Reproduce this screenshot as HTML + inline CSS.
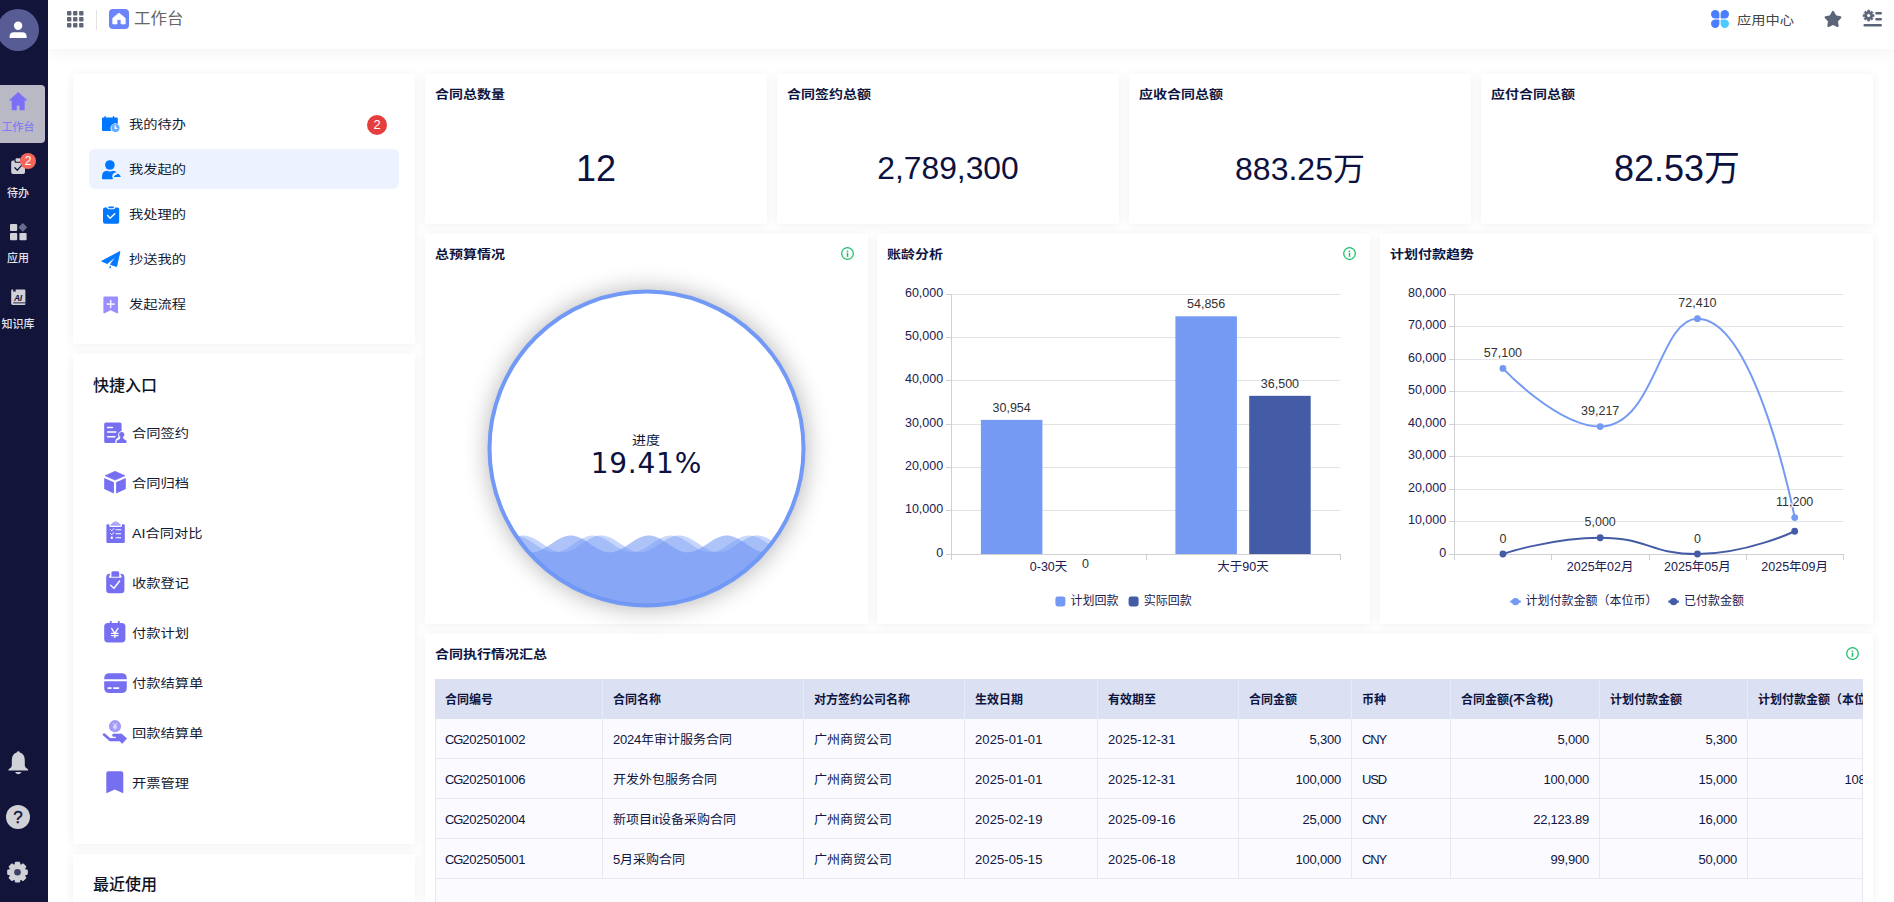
<!DOCTYPE html><html lang="zh-CN"><head><meta charset="utf-8"><title>工作台</title><style>
*{box-sizing:border-box;margin:0;padding:0}
html,body{width:1894px;height:902px;overflow:hidden;background:#fff}
body{font-family:"Liberation Sans","Noto Sans CJK SC",sans-serif;color:#1f2330;position:relative;-webkit-font-smoothing:antialiased}
.abs{position:absolute}
.z{display:inline-block;transform:scale(1.02,.89);transform-origin:0 52%}
.zc{transform:scaleY(.89);transform-origin:50% 52%}
.ct .z{transform:scaleY(.87);transform-origin:50% 50%}
.z13{display:inline-block;transform:scaleY(.95);transform-origin:50% 55%;letter-spacing:0}
.t{position:absolute;white-space:nowrap;line-height:1}
svg{position:absolute;overflow:visible}
#side{position:absolute;left:0;top:0;width:48px;height:902px;background:#121539}
#hdr{position:absolute;left:48px;top:0;width:1846px;height:49px;background:#fff;box-shadow:0 2px 18px rgba(0,0,0,.06)}
.card{position:absolute;background:#fff;box-shadow:0 1px 10px rgba(0,0,0,.065)}
.ct{position:absolute;left:10px;font-size:14px;font-weight:700;color:#0e1541;line-height:14px;white-space:nowrap}
.num{position:absolute;left:0;right:0;text-align:center;font-size:36px;line-height:36px;color:#0c1140;white-space:nowrap}
.mi{position:absolute;left:16px;width:310px;height:40px;border-radius:6px}
.mi span{position:absolute;left:40px;top:14px;font-size:14px;line-height:14px;color:#131a33;white-space:nowrap}
.mi span span{position:static}
.qi{position:absolute;left:59px;font-size:14px;line-height:14px;color:#131a33;white-space:nowrap}
.sl{position:absolute;left:-12px;width:60px;text-align:center;font-size:11px;line-height:12px;color:#e2e2e8;white-space:nowrap;font-weight:500}
.h2{position:absolute;left:20px;font-size:16px;line-height:16px;font-weight:500;color:#10131f;white-space:nowrap}
</style></head><body>
<div id="hdr"><svg style="left:18.6px;top:10.8px" width="17" height="17" viewBox="0 0 17 17" ><rect x="0.00" y="0.00" width="4.4" height="4.4" rx="0.9" fill="#5f6675"/><rect x="6.05" y="0.00" width="4.4" height="4.4" rx="0.9" fill="#5f6675"/><rect x="12.10" y="0.00" width="4.4" height="4.4" rx="0.9" fill="#5f6675"/><rect x="0.00" y="6.05" width="4.4" height="4.4" rx="0.9" fill="#5f6675"/><rect x="6.05" y="6.05" width="4.4" height="4.4" rx="0.9" fill="#5f6675"/><rect x="12.10" y="6.05" width="4.4" height="4.4" rx="0.9" fill="#5f6675"/><rect x="0.00" y="12.10" width="4.4" height="4.4" rx="0.9" fill="#5f6675"/><rect x="6.05" y="12.10" width="4.4" height="4.4" rx="0.9" fill="#5f6675"/><rect x="12.10" y="12.10" width="4.4" height="4.4" rx="0.9" fill="#5f6675"/></svg><div class="abs" style="left:48px;top:10px;width:1px;height:20px;background:#e3e3e3"></div><svg style="left:61px;top:9px" width="20" height="20" viewBox="0 0 20 20" ><rect x="0" y="0" width="20" height="20" rx="4" fill="#6b84fa"/><path d="M10 4.1 L16.2 9.2 L16.2 14.9 L12 14.9 L12 11.4 Q12 10.6 11.2 10.6 L8.8 10.6 Q8 10.6 8 11.4 L8 14.9 L3.8 14.9 L3.8 9.2 Z" fill="#fff" stroke="#fff" stroke-width="0.8" stroke-linejoin="round"/></svg><svg style="left:1663px;top:9.9px" width="18" height="18" viewBox="0 0 18 18" ><path d="M4.2 0 A4.2 4.2 0 0 1 8.4 4.2 L8.4 7.2 Q8.4 8.4 7.2 8.4 L4.2 8.4 A4.2 4.2 0 0 1 4.2 0Z" fill="#4a7dff"/><path d="M13.8 0 A4.2 4.2 0 0 1 13.8 8.4 L10.8 8.4 Q9.6 8.4 9.6 7.2 L9.6 4.2 A4.2 4.2 0 0 1 13.8 0Z" fill="#4a7dff"/><path d="M4.2 18 A4.2 4.2 0 0 1 4.2 9.6 L7.2 9.6 Q8.4 9.6 8.4 10.8 L8.4 13.8 A4.2 4.2 0 0 1 4.2 18Z" fill="#4a7dff"/><path d="M13.8 18 A4.2 4.2 0 0 1 9.6 13.8 L9.6 10.8 Q9.6 9.6 10.8 9.6 L13.8 9.6 A4.2 4.2 0 0 1 13.8 18Z" fill="#4dcbff"/></svg><svg style="left:1776px;top:10px" width="18" height="18" viewBox="0 0 18 18" ><path d="M9.00,2.00L11.41,6.38L16.32,7.32L12.90,10.97L13.53,15.93L9.00,13.80L4.47,15.93L5.10,10.97L1.68,7.32L6.59,6.38Z" fill="#5b6478" stroke="#5b6478" stroke-width="2.2" stroke-linejoin="round"/></svg><svg style="left:1815px;top:10px" width="19" height="17" viewBox="0 0 19 17" ><path d="M10.92,4.67L10.92,6.53L9.59,6.56L9.10,7.74L10.02,8.71L8.71,10.02L7.74,9.10L6.56,9.59L6.53,10.92L4.67,10.92L4.64,9.59L3.46,9.10L2.49,10.02L1.18,8.71L2.10,7.74L1.61,6.56L0.28,6.53L0.28,4.67L1.61,4.64L2.10,3.46L1.18,2.49L2.49,1.18L3.46,2.10L4.64,1.61L4.67,0.28L6.53,0.28L6.56,1.61L7.74,2.10L8.71,1.18L10.02,2.49L9.10,3.46L9.59,4.64ZM7.60,5.60A2.0,2.0 0 1 0 3.60,5.60A2.0,2.0 0 1 0 7.60,5.60Z" fill="#5b6478" fill-rule="evenodd" stroke="#5b6478" stroke-width="0.9" stroke-linejoin="round"/><path d="M13.4 3.3 H17.8 M13.4 9.2 H17.8 M1.6 15.3 H17.8" stroke="#5b6478" stroke-width="2.4" stroke-linecap="round" fill="none"/></svg><div class="t" style="left:86px;top:11px;font-size:16px;line-height:16px;color:#666"><span class="z" style="transform:scale(1.03,.96)">工作台</span></div><div class="t" style="left:1688.5px;top:14.4px;font-size:14px;line-height:14px;color:#444"><span class="z">应用中心</span></div></div>
<div class="card" style="left:73px;top:74px;width:342px;height:270px">
<div class="mi" style="top:30px;"><svg style="left:12px;top:11.5px" width="20" height="17" viewBox="0 0 20 17" ><path d="M1 2.4 Q1 1.4 2 1.4 L3.4 1.4 L3.4 0.6 Q3.4 0.1 4.1 0.1 Q4.8 0.1 4.8 0.6 L4.8 1.4 L11.8 1.4 L11.8 0.6 Q11.8 0.1 12.5 0.1 Q13.2 0.1 13.2 0.6 L13.2 1.4 L15.8 1.4 Q16.8 1.4 16.8 2.4 L16.8 7.9 A4.9 4.9 0 0 0 10.4 14.9 L2 14.9 Q1 14.9 1 13.9 Z" fill="#0077ff"/><circle cx="14.45" cy="12.1" r="4.1" fill="#66adff"/><path d="M14.2 9.9 V12.4 H15.9" stroke="#fff" stroke-width="1.3" fill="none" stroke-linecap="round" stroke-linejoin="round"/></svg><span><span class="z">我的待办</span></span></div>
<div class="mi" style="top:75px;background:#ecf3fe;"><svg style="left:12px;top:11px" width="21" height="20" viewBox="0 0 21 20" ><circle cx="8.9" cy="5" r="4.8" fill="#0077ff"/><path d="M1 18.4 L1 16.5 Q1 11 6 10.7 Q9 12.3 12 10.7 Q14.5 10.9 15.8 12.6 L14 12.6 Q11.4 13.4 11.2 16 Q11.2 17.4 12 18.4 Q12 19.2 11 19.2 L2 19.2 Q1 19.2 1 18.4Z" fill="#0077ff"/><path d="M13.4 16.4 L19.1 16.4 L17.2 14.3 Z" fill="#0077ff" stroke="#0077ff" stroke-width="1.1" fill="none" stroke-linejoin="round" stroke-linecap="round"/></svg><span><span class="z">我发起的</span></span></div>
<div class="mi" style="top:120px;"><svg style="left:12.8px;top:11.8px" width="18" height="18" viewBox="0 0 18 18" ><path d="M1 3.6 Q1 1.6 3 1.6 L4.9 1.6 Q5.2 3.2 6.6 3.2 L11.6 3.2 Q13 3.2 13.3 1.6 L15.2 1.6 Q17.2 1.6 17.2 3.6 L17.2 15.8 Q17.2 17.8 15.2 17.8 L3 17.8 Q1 17.8 1 15.8Z" fill="#0077ff"/><rect x="6.2" y="0.4" width="5.8" height="1.8" rx="0.9" fill="#0077ff"/><path d="M5.6 9.6 L8.1 12.2 L12.8 7.8" stroke="#fff" stroke-width="1.5" fill="none" stroke-linecap="round" stroke-linejoin="round"/></svg><span><span class="z">我处理的</span></span></div>
<div class="mi" style="top:165px;"><svg style="left:12px;top:11px" width="20" height="19" viewBox="0 0 20 19" ><path d="M18.9 1.5 L0.7 11.2 L6.3 13.6 L15.8 5.6 L9.4 14.4 L15.6 16.5 Z" fill="#0077ff" stroke="#0077ff" stroke-width="0.9" stroke-linejoin="round"/><path d="M9.3 16.6 L9.2 17.8" stroke="#0077ff" stroke-width="1.3" stroke-linecap="round"/></svg><span><span class="z">抄送我的</span></span></div>
<div class="mi" style="top:210px;"><svg style="left:14.2px;top:11.8px" width="16" height="18" viewBox="0 0 16 18" ><path d="M0.4 1.6 Q0.4 0.4 1.6 0.4 L13.8 0.4 Q15 0.4 15 1.6 L15 16.4 Q15 17.6 13.8 17.2 L7.7 14.2 L1.6 17.2 Q0.4 17.6 0.4 16.4Z" fill="#9b8cff"/><path d="M7.7 4.6 V11.6 M4.2 8.1 H11.2" stroke="#f1eeff" stroke-width="1.6" stroke-linecap="round"/></svg><span><span class="z">发起流程</span></span></div>
<div class="abs" style="left:294px;top:41px;width:20px;height:20px;border-radius:10px;background:#e53e3e;color:#fff;font-size:13px;line-height:20px;text-align:center">2</div>
</div>
<div class="card" style="left:73px;top:354px;width:342px;height:490px"><div class="h2" style="top:23.5px">快捷入口</div>
<svg style="left:30.8px;top:67.8px" width="23" height="21" viewBox="0 0 23 21" ><path d="M0.2 2 Q0.2 0.4 1.8 0.4 L16 0.4 Q17.6 0.4 17.6 2 L17.6 9 A4 4 0 0 0 14.6 15 Q11.4 16.6 11.2 19.6 L11.2 21 L1.8 21 Q0.2 21 0.2 19.4Z" fill="#776ff2"/><path d="M3.6 5.4 H8.4 M3.6 10.1 H11.8 M3.6 14.8 H10.8" stroke="#fff" stroke-width="1.5" stroke-linecap="round"/><circle cx="17.7" cy="12.6" r="2.6" fill="#776ff2"/><path d="M12.6 21 L12.6 19.6 Q12.6 18.2 14 18 Q16.2 17.6 16.6 14.8 L18.8 14.8 Q19.2 17.6 21.4 18 Q22.6 18.2 22.6 19.6 L22.6 20.2 Q22.6 21 21.8 21Z" fill="#776ff2"/></svg><div class="qi" style="top:72.7px"><span class="z">合同签约</span></div>
<svg style="left:31px;top:116.6px" width="22" height="23" viewBox="0 0 22 23" ><path d="M11 0.3 L21 4.7 L11 9.1 L1 4.7Z" fill="#776ff2" stroke="#776ff2" stroke-width="0.6" stroke-linejoin="round"/><path d="M0.2 7 L9.9 11.3 L9.9 22.4 L0.2 18.1Z" fill="#776ff2"/><path d="M21.8 7 L12.1 11.3 L12.1 22.4 L21.8 18.1Z" fill="#776ff2"/></svg><div class="qi" style="top:122.7px"><span class="z">合同归档</span></div>
<svg style="left:32.9px;top:166.8px" width="19" height="22" viewBox="0 0 19 22" ><path d="M0.4 4.4 Q0.4 3.2 1.6 3.2 L3.2 3.2 L3.2 4.6 Q3.2 6 4.6 6 L14.6 6 Q16 6 16 4.6 L16 3.2 L17.6 3.2 Q18.8 3.2 18.8 4.4 L18.8 20.8 Q18.8 22 17.6 22 L1.6 22 Q0.4 22 0.4 20.8Z" fill="#776ff2"/><path d="M4.4 4.8 L4.4 3.8 L8 0.7 Q9.6 -0.3 11.2 0.7 L14.8 3.8 L14.8 4.8Z" fill="#a9a2f6"/><circle cx="9.6" cy="1.8" r="0.7" fill="#d6d2fb"/><path d="M4.6 8.6 L5.8 9.8 L7.8 7.6 M4.6 12.6 L5.8 13.8 L7.8 11.6" stroke="#fff" stroke-width="1" fill="none" stroke-linecap="round" stroke-linejoin="round"/><circle cx="5.8" cy="16.7" r="1.2" fill="#fff"/><path d="M10 8.7 H14.8 M10 12.7 H14.8 M10 16.7 H14.8" stroke="#fff" stroke-width="1.1" stroke-linecap="round"/></svg><div class="qi" style="top:172.7px"><span class="z">AI合同对比</span></div>
<svg style="left:32.9px;top:216.8px" width="19" height="23" viewBox="0 0 19 23" ><path d="M0.2 6.2 Q0.2 2.8 3.6 2.8 L4.4 2.8 L3 5.6 Q2.6 6.8 3.8 6.8 L14.8 6.8 Q16 6.8 15.6 5.6 L14.2 2.8 L15 2.8 Q18.4 2.8 18.4 6.2 L18.4 19 Q18.4 22.2 15 22.2 L3.6 22.2 Q0.2 22.2 0.2 19Z" fill="#776ff2"/><path d="M5.4 5.8 L5.4 1.8 Q5.4 0.2 7 0.2 L11.6 0.2 Q13.2 0.2 13.2 1.8 L13.2 5.8Z" fill="#776ff2"/><path d="M4.6 14.2 L8 17.2 L13.6 10" stroke="#fff" stroke-width="1.4" fill="none" stroke-linecap="round" stroke-linejoin="round"/></svg><div class="qi" style="top:222.7px"><span class="z">收款登记</span></div>
<svg style="left:31.3px;top:267px" width="22" height="22" viewBox="0 0 22 22" ><rect x="0.2" y="2" width="21.2" height="19.4" rx="3.6" fill="#776ff2"/><rect x="5.9" y="0" width="1.8" height="3" rx="0.6" fill="#776ff2"/><rect x="13.9" y="0" width="1.8" height="3" rx="0.6" fill="#776ff2"/><path d="M7.6 7.4 L10.8 12.4 L14 7.4 M10.8 12.4 V16.6 M7.6 12.4 H14 M7.6 14.6 H14" stroke="#fff" stroke-width="1.3" fill="none" stroke-linecap="round" stroke-linejoin="round"/></svg><div class="qi" style="top:272.7px"><span class="z">付款计划</span></div>
<svg style="left:30.7px;top:319px" width="23" height="20" viewBox="0 0 23 20" ><path d="M0.2 6.2 L0.2 5.4 Q0.2 0.2 5.4 0.2 L17.6 0.2 Q22.8 0.2 22.8 5.4 L22.8 6.2Z" fill="#776ff2"/><path d="M0.2 8.2 L22.8 8.2 L22.8 14.8 Q22.8 20 17.6 20 L5.4 20 Q0.2 20 0.2 14.8Z" fill="#776ff2"/><path d="M4.2 15.1 H7 M9.8 15.1 H14.6" stroke="#fff" stroke-width="1.6" stroke-linecap="round"/></svg><div class="qi" style="top:322.7px"><span class="z">付款结算单</span></div>
<svg style="left:30.2px;top:366px" width="24" height="24" viewBox="0 0 24 24" ><circle cx="12" cy="6.2" r="6.1" fill="#a39cf6"/><path d="M10.4 3.4 L12 5.6 L13.6 3.4 M12 5.6 V9.4 M10.2 6.2 H13.8 M10.2 7.8 H13.8" stroke="#e6e3fd" stroke-width="0.9" fill="none" stroke-linecap="round"/><path d="M1 14.6 L6.8 19.6 L12 19.6" stroke="#776ff2" stroke-width="2.6" fill="none" stroke-linecap="round" stroke-linejoin="round"/><path d="M10 14 L18.6 14 L23.8 18.6 L19.2 23.4 L16.6 21 L7 21 L5.6 19 L12.6 18.4 Q13.8 17 12.6 16.4 L10 16.4 Q8.8 15.2 10 14Z" fill="#776ff2" stroke="#776ff2" stroke-width="0.6" stroke-linejoin="round"/></svg><div class="qi" style="top:372.7px"><span class="z">回款结算单</span></div>
<svg style="left:33.3px;top:416.8px" width="18" height="23" viewBox="0 0 18 23" ><path d="M0.3 2.2 Q0.3 0.2 2.3 0.2 L15.3 0.2 Q17.3 0.2 17.3 2.2 L17.3 21.6 Q17.3 22.4 16.6 22 L8.8 18.4 L1 22 Q0.3 22.4 0.3 21.6Z" fill="#776ff2"/></svg><div class="qi" style="top:422.7px"><span class="z">开票管理</span></div>
</div>
<div class="card" style="left:73px;top:854px;width:342px;height:48px"><div class="h2" style="top:22.5px">最近使用</div></div>
<div class="card" style="left:425px;top:74px;width:342px;height:150px"><div class="ct" style="top:13.5px"><span class="z">合同总数量</span></div><div class="num" style="top:76.8px;font-size:36px;line-height:36px">12</div></div>
<div class="card" style="left:777px;top:74px;width:342px;height:150px"><div class="ct" style="top:13.5px"><span class="z">合同签约总额</span></div><div class="num" style="top:78.89999999999999px;font-size:31.8px;line-height:31.8px">2,789,300</div></div>
<div class="card" style="left:1129px;top:74px;width:342px;height:150px"><div class="ct" style="top:13.5px"><span class="z">应收合同总额</span></div><div class="num" style="top:78.8px;font-size:32px;line-height:32px">883.25万</div></div>
<div class="card" style="left:1481px;top:74px;width:392px;height:150px"><div class="ct" style="top:13.5px"><span class="z">应付合同总额</span></div><div class="num" style="top:76.8px;font-size:36px;line-height:36px">82.53万</div></div>
<div class="card" style="left:425px;top:234px;width:443px;height:390px"><div class="ct" style="top:13.5px"><span class="z">总预算情况</span></div><svg style="left:416.3px;top:13px" width="13" height="13" viewBox="0 0 13 13" ><circle cx="6.5" cy="6.5" r="5.8" fill="none" stroke="#1cbd68" stroke-width="1.25"/><rect x="5.75" y="5.7" width="1.5" height="4.1" fill="#1cbd68"/><rect x="5.75" y="3.7" width="1.5" height="1.3" fill="#1cbd68"/></svg><div class="abs" style="left:63.5px;top:56.5px;width:316.0px;height:316.0px;border-radius:50%;background:#fff;box-shadow:0 0 24px 1px rgba(0,0,0,.30)"></div><svg style="left:0;top:0" width="442" height="390" viewBox="0 0 442 390"><defs><clipPath id="lqc"><circle cx="221.5" cy="214.5" r="156.0"/></clipPath></defs><circle cx="221.5" cy="214.5" r="157.0" fill="#fff" stroke="#7299f5" stroke-width="4.0"/><g clip-path="url(#lqc)"><path d="M60.5,315.99L62.0,315.24L63.5,314.42L65.0,313.53L66.5,312.59L68.0,311.61L69.5,310.60L71.0,309.59L72.5,308.58L74.0,307.59L75.5,306.64L77.0,305.73L78.5,304.88L80.0,304.11L81.5,303.42L83.0,302.83L84.5,302.34L86.0,301.96L87.5,301.70L89.0,301.56L90.5,301.54L92.0,301.64L93.5,301.86L95.0,302.20L96.5,302.65L98.0,303.21L99.5,303.87L101.0,304.62L102.5,305.44L104.0,306.33L105.5,307.27L107.0,308.25L108.5,309.25L110.0,310.27L111.5,311.28L113.0,312.27L114.5,313.22L116.0,314.13L117.5,314.98L119.0,315.75L120.5,316.44L122.0,317.03L123.5,317.52L125.0,317.90L126.5,318.16L128.0,318.30L129.5,318.32L131.0,318.22L132.5,318.00L134.0,317.66L135.5,317.20L137.0,316.64L138.5,315.99L140.0,315.24L141.5,314.42L143.0,313.53L144.5,312.59L146.0,311.61L147.5,310.60L149.0,309.59L150.5,308.58L152.0,307.59L153.5,306.64L155.0,305.73L156.5,304.88L158.0,304.11L159.5,303.42L161.0,302.83L162.5,302.34L164.0,301.96L165.5,301.70L167.0,301.56L168.5,301.54L170.0,301.64L171.5,301.86L173.0,302.20L174.5,302.65L176.0,303.21L177.5,303.87L179.0,304.62L180.5,305.44L182.0,306.33L183.5,307.27L185.0,308.25L186.5,309.25L188.0,310.27L189.5,311.28L191.0,312.27L192.5,313.22L194.0,314.13L195.5,314.98L197.0,315.75L198.5,316.44L200.0,317.03L201.5,317.52L203.0,317.90L204.5,318.16L206.0,318.30L207.5,318.32L209.0,318.22L210.5,318.00L212.0,317.66L213.5,317.20L215.0,316.64L216.5,315.99L218.0,315.24L219.5,314.42L221.0,313.53L222.5,312.59L224.0,311.61L225.5,310.60L227.0,309.59L228.5,308.58L230.0,307.59L231.5,306.64L233.0,305.73L234.5,304.88L236.0,304.11L237.5,303.42L239.0,302.83L240.5,302.34L242.0,301.96L243.5,301.70L245.0,301.56L246.5,301.54L248.0,301.64L249.5,301.86L251.0,302.20L252.5,302.65L254.0,303.21L255.5,303.87L257.0,304.62L258.5,305.44L260.0,306.33L261.5,307.27L263.0,308.25L264.5,309.25L266.0,310.27L267.5,311.28L269.0,312.27L270.5,313.22L272.0,314.13L273.5,314.98L275.0,315.75L276.5,316.44L278.0,317.03L279.5,317.52L281.0,317.90L282.5,318.16L284.0,318.30L285.5,318.32L287.0,318.22L288.5,318.00L290.0,317.66L291.5,317.20L293.0,316.64L294.5,315.99L296.0,315.24L297.5,314.42L299.0,313.53L300.5,312.59L302.0,311.61L303.5,310.60L305.0,309.59L306.5,308.58L308.0,307.59L309.5,306.64L311.0,305.73L312.5,304.88L314.0,304.11L315.5,303.42L317.0,302.83L318.5,302.34L320.0,301.96L321.5,301.70L323.0,301.56L324.5,301.54L326.0,301.64L327.5,301.86L329.0,302.20L330.5,302.65L332.0,303.21L333.5,303.87L335.0,304.62L336.5,305.44L338.0,306.33L339.5,307.27L341.0,308.25L342.5,309.25L344.0,310.27L345.5,311.28L347.0,312.27L348.5,313.22L350.0,314.13L351.5,314.98L353.0,315.75L354.5,316.44L356.0,317.03L357.5,317.52L359.0,317.90L360.5,318.16L362.0,318.30L363.5,318.32L365.0,318.22L366.5,318.00L368.0,317.66L369.5,317.20L371.0,316.64L372.5,315.99L374.0,315.24L375.5,314.42L377.0,313.53L378.5,312.59L380.0,311.61L381.5,310.60L382.5,375.5L60.5,375.5Z" fill="#6e95f4" fill-opacity="0.36"/><path d="M60.5,318.28L62.0,318.12L63.5,317.83L65.0,317.43L66.5,316.92L68.0,316.31L69.5,315.60L71.0,314.81L72.5,313.95L74.0,313.03L75.5,312.07L77.0,311.08L78.5,310.06L80.0,309.05L81.5,308.05L83.0,307.08L84.5,306.15L86.0,305.27L87.5,304.46L89.0,303.73L90.5,303.09L92.0,302.56L93.5,302.12L95.0,301.81L96.5,301.61L98.0,301.53L99.5,301.58L101.0,301.74L102.5,302.03L104.0,302.43L105.5,302.94L107.0,303.55L108.5,304.26L110.0,305.05L111.5,305.91L113.0,306.82L114.5,307.79L116.0,308.78L117.5,309.79L119.0,310.81L120.5,311.81L122.0,312.78L123.5,313.71L125.0,314.59L126.5,315.40L128.0,316.13L129.5,316.76L131.0,317.30L132.5,317.73L134.0,318.05L135.5,318.25L137.0,318.33L138.5,318.28L140.0,318.12L141.5,317.83L143.0,317.43L144.5,316.92L146.0,316.31L147.5,315.60L149.0,314.81L150.5,313.95L152.0,313.03L153.5,312.07L155.0,311.08L156.5,310.06L158.0,309.05L159.5,308.05L161.0,307.08L162.5,306.15L164.0,305.27L165.5,304.46L167.0,303.73L168.5,303.09L170.0,302.56L171.5,302.12L173.0,301.81L174.5,301.61L176.0,301.53L177.5,301.58L179.0,301.74L180.5,302.03L182.0,302.43L183.5,302.94L185.0,303.55L186.5,304.26L188.0,305.05L189.5,305.91L191.0,306.82L192.5,307.79L194.0,308.78L195.5,309.79L197.0,310.81L198.5,311.81L200.0,312.78L201.5,313.71L203.0,314.59L204.5,315.40L206.0,316.13L207.5,316.76L209.0,317.30L210.5,317.73L212.0,318.05L213.5,318.25L215.0,318.33L216.5,318.28L218.0,318.12L219.5,317.83L221.0,317.43L222.5,316.92L224.0,316.31L225.5,315.60L227.0,314.81L228.5,313.95L230.0,313.03L231.5,312.07L233.0,311.08L234.5,310.06L236.0,309.05L237.5,308.05L239.0,307.08L240.5,306.15L242.0,305.27L243.5,304.46L245.0,303.73L246.5,303.09L248.0,302.56L249.5,302.12L251.0,301.81L252.5,301.61L254.0,301.53L255.5,301.58L257.0,301.74L258.5,302.03L260.0,302.43L261.5,302.94L263.0,303.55L264.5,304.26L266.0,305.05L267.5,305.91L269.0,306.82L270.5,307.79L272.0,308.78L273.5,309.79L275.0,310.81L276.5,311.81L278.0,312.78L279.5,313.71L281.0,314.59L282.5,315.40L284.0,316.13L285.5,316.76L287.0,317.30L288.5,317.73L290.0,318.05L291.5,318.25L293.0,318.33L294.5,318.28L296.0,318.12L297.5,317.83L299.0,317.43L300.5,316.92L302.0,316.31L303.5,315.60L305.0,314.81L306.5,313.95L308.0,313.03L309.5,312.07L311.0,311.08L312.5,310.06L314.0,309.05L315.5,308.05L317.0,307.08L318.5,306.15L320.0,305.27L321.5,304.46L323.0,303.73L324.5,303.09L326.0,302.56L327.5,302.12L329.0,301.81L330.5,301.61L332.0,301.53L333.5,301.58L335.0,301.74L336.5,302.03L338.0,302.43L339.5,302.94L341.0,303.55L342.5,304.26L344.0,305.05L345.5,305.91L347.0,306.82L348.5,307.79L350.0,308.78L351.5,309.79L353.0,310.81L354.5,311.81L356.0,312.78L357.5,313.71L359.0,314.59L360.5,315.40L362.0,316.13L363.5,316.76L365.0,317.30L366.5,317.73L368.0,318.05L369.5,318.25L371.0,318.33L372.5,318.28L374.0,318.12L375.5,317.83L377.0,317.43L378.5,316.92L380.0,316.31L381.5,315.60L382.5,375.5L60.5,375.5Z" fill="#6e95f4" fill-opacity="0.4"/><path d="M60.5,302.90L62.0,302.40L63.5,302.01L65.0,301.73L66.5,301.57L68.0,301.53L69.5,301.62L71.0,301.82L72.5,302.15L74.0,302.59L75.5,303.13L77.0,303.78L78.5,304.51L80.0,305.33L81.5,306.21L83.0,307.14L84.5,308.12L86.0,309.12L87.5,310.13L89.0,311.14L90.5,312.14L92.0,313.10L93.5,314.01L95.0,314.87L96.5,315.65L98.0,316.35L99.5,316.96L101.0,317.46L102.5,317.85L104.0,318.13L105.5,318.29L107.0,318.33L108.5,318.24L110.0,318.03L111.5,317.71L113.0,317.27L114.5,316.72L116.0,316.08L117.5,315.35L119.0,314.53L120.5,313.65L122.0,312.72L123.5,311.74L125.0,310.74L126.5,309.73L128.0,308.72L129.5,307.72L131.0,306.76L132.5,305.85L134.0,304.99L135.5,304.21L137.0,303.51L138.5,302.90L140.0,302.40L141.5,302.01L143.0,301.73L144.5,301.57L146.0,301.53L147.5,301.62L149.0,301.82L150.5,302.15L152.0,302.59L153.5,303.13L155.0,303.78L156.5,304.51L158.0,305.33L159.5,306.21L161.0,307.14L162.5,308.12L164.0,309.12L165.5,310.13L167.0,311.14L168.5,312.14L170.0,313.10L171.5,314.01L173.0,314.87L174.5,315.65L176.0,316.35L177.5,316.96L179.0,317.46L180.5,317.85L182.0,318.13L183.5,318.29L185.0,318.33L186.5,318.24L188.0,318.03L189.5,317.71L191.0,317.27L192.5,316.72L194.0,316.08L195.5,315.35L197.0,314.53L198.5,313.65L200.0,312.72L201.5,311.74L203.0,310.74L204.5,309.73L206.0,308.72L207.5,307.72L209.0,306.76L210.5,305.85L212.0,304.99L213.5,304.21L215.0,303.51L216.5,302.90L218.0,302.40L219.5,302.01L221.0,301.73L222.5,301.57L224.0,301.53L225.5,301.62L227.0,301.82L228.5,302.15L230.0,302.59L231.5,303.13L233.0,303.78L234.5,304.51L236.0,305.33L237.5,306.21L239.0,307.14L240.5,308.12L242.0,309.12L243.5,310.13L245.0,311.14L246.5,312.14L248.0,313.10L249.5,314.01L251.0,314.87L252.5,315.65L254.0,316.35L255.5,316.96L257.0,317.46L258.5,317.85L260.0,318.13L261.5,318.29L263.0,318.33L264.5,318.24L266.0,318.03L267.5,317.71L269.0,317.27L270.5,316.72L272.0,316.08L273.5,315.35L275.0,314.53L276.5,313.65L278.0,312.72L279.5,311.74L281.0,310.74L282.5,309.73L284.0,308.72L285.5,307.72L287.0,306.76L288.5,305.85L290.0,304.99L291.5,304.21L293.0,303.51L294.5,302.90L296.0,302.40L297.5,302.01L299.0,301.73L300.5,301.57L302.0,301.53L303.5,301.62L305.0,301.82L306.5,302.15L308.0,302.59L309.5,303.13L311.0,303.78L312.5,304.51L314.0,305.33L315.5,306.21L317.0,307.14L318.5,308.12L320.0,309.12L321.5,310.13L323.0,311.14L324.5,312.14L326.0,313.10L327.5,314.01L329.0,314.87L330.5,315.65L332.0,316.35L333.5,316.96L335.0,317.46L336.5,317.85L338.0,318.13L339.5,318.29L341.0,318.33L342.5,318.24L344.0,318.03L345.5,317.71L347.0,317.27L348.5,316.72L350.0,316.08L351.5,315.35L353.0,314.53L354.5,313.65L356.0,312.72L357.5,311.74L359.0,310.74L360.5,309.73L362.0,308.72L363.5,307.72L365.0,306.76L366.5,305.85L368.0,304.99L369.5,304.21L371.0,303.51L372.5,302.90L374.0,302.40L375.5,302.01L377.0,301.73L378.5,301.57L380.0,301.53L381.5,301.62L382.5,375.5L60.5,375.5Z" fill="#6e95f4" fill-opacity="0.56"/></g></svg><div class="t" style="left:0;width:442px;text-align:center;top:200px;font-size:14px;line-height:14px;color:#0e1541"><span class="z zc">进度</span></div><div class="t" style="left:0;width:442px;text-align:center;top:216.2px;font-size:28px;line-height:28px;color:#0c1140;font-family:'DejaVu Sans','Liberation Sans',sans-serif;letter-spacing:0.75px;text-indent:0.75px">19.41%</div></div>
<div class="card" style="left:877px;top:234px;width:493px;height:390px"><div class="ct" style="top:13.5px"><span class="z">账龄分析</span></div><svg style="left:466.3px;top:13px" width="13" height="13" viewBox="0 0 13 13" ><circle cx="6.5" cy="6.5" r="5.8" fill="none" stroke="#1cbd68" stroke-width="1.25"/><rect x="5.75" y="5.7" width="1.5" height="4.1" fill="#1cbd68"/><rect x="5.75" y="3.7" width="1.5" height="1.3" fill="#1cbd68"/></svg><svg style="left:0;top:0;font-family:'Liberation Sans','Noto Sans CJK SC',sans-serif" width="493" height="390" viewBox="0 0 493 390"><path d="M74.0 60.50H463.3" stroke="#e2e3e6" stroke-width="1"/><path d="M69.0 60.50H74.5" stroke="#cfcfd4" stroke-width="1"/><text x="66.2" y="62.80" text-anchor="end" font-size="12.5" fill="#1b2050">60,000</text><path d="M74.0 103.50H463.3" stroke="#e2e3e6" stroke-width="1"/><path d="M69.0 103.50H74.5" stroke="#cfcfd4" stroke-width="1"/><text x="66.2" y="105.80" text-anchor="end" font-size="12.5" fill="#1b2050">50,000</text><path d="M74.0 146.50H463.3" stroke="#e2e3e6" stroke-width="1"/><path d="M69.0 146.50H74.5" stroke="#cfcfd4" stroke-width="1"/><text x="66.2" y="148.80" text-anchor="end" font-size="12.5" fill="#1b2050">40,000</text><path d="M74.0 190.50H463.3" stroke="#e2e3e6" stroke-width="1"/><path d="M69.0 190.50H74.5" stroke="#cfcfd4" stroke-width="1"/><text x="66.2" y="192.80" text-anchor="end" font-size="12.5" fill="#1b2050">30,000</text><path d="M74.0 233.50H463.3" stroke="#e2e3e6" stroke-width="1"/><path d="M69.0 233.50H74.5" stroke="#cfcfd4" stroke-width="1"/><text x="66.2" y="235.80" text-anchor="end" font-size="12.5" fill="#1b2050">20,000</text><path d="M74.0 276.50H463.3" stroke="#e2e3e6" stroke-width="1"/><path d="M69.0 276.50H74.5" stroke="#cfcfd4" stroke-width="1"/><text x="66.2" y="278.80" text-anchor="end" font-size="12.5" fill="#1b2050">10,000</text><path d="M74.0 320.50H463.3" stroke="#cfcfd4" stroke-width="1"/><path d="M69.0 320.50H74.5" stroke="#cfcfd4" stroke-width="1"/><text x="66.2" y="322.80" text-anchor="end" font-size="12.5" fill="#1b2050">0</text><path d="M74.5 60.0V321.0" stroke="#cfcfd4" stroke-width="1"/><path d="M74.50 320.0V326.0" stroke="#cfcfd4" stroke-width="1"/><path d="M269.50 320.0V326.0" stroke="#cfcfd4" stroke-width="1"/><path d="M463.50 320.0V326.0" stroke="#cfcfd4" stroke-width="1"/><rect x="103.90" y="185.87" width="61.5" height="134.13" fill="#749af3"/><text x="134.65" y="177.87" text-anchor="middle" font-size="12.5" fill="#333333">30,954</text><text x="208.45" y="334.30" text-anchor="middle" font-size="12.5" fill="#333333">0</text><text x="171.55" y="336.70" text-anchor="middle" font-size="12.5" fill="#1b2050">0-30天</text><rect x="298.40" y="82.29" width="61.5" height="237.71" fill="#749af3"/><text x="329.15" y="74.29" text-anchor="middle" font-size="12.5" fill="#333333">54,856</text><rect x="372.20" y="161.83" width="61.5" height="158.17" fill="#445ca6"/><text x="402.95" y="153.83" text-anchor="middle" font-size="12.5" fill="#333333">36,500</text><text x="366.05" y="336.70" text-anchor="middle" font-size="12.5" fill="#1b2050">大于90天</text><rect x="178.4" y="362.4" width="10" height="10" rx="2.4" fill="#749af3"/><text x="193.5" y="370.8" font-size="12" fill="#1b2050">计划回款</text><rect x="251.6" y="362.4" width="10" height="10" rx="2.4" fill="#445ca6"/><text x="266.7" y="370.8" font-size="12" fill="#1b2050">实际回款</text></svg></div>
<div class="card" style="left:1380px;top:234px;width:493px;height:390px"><div class="ct" style="top:13.5px"><span class="z">计划付款趋势</span></div><svg style="left:0;top:0;font-family:'Liberation Sans','Noto Sans CJK SC',sans-serif" width="493" height="390" viewBox="0 0 493 390"><path d="M74.0 60.50H463.3" stroke="#e2e3e6" stroke-width="1"/><path d="M69.0 60.50H74.5" stroke="#cfcfd4" stroke-width="1"/><text x="66.2" y="62.80" text-anchor="end" font-size="12.5" fill="#1b2050">80,000</text><path d="M74.0 92.50H463.3" stroke="#e2e3e6" stroke-width="1"/><path d="M69.0 92.50H74.5" stroke="#cfcfd4" stroke-width="1"/><text x="66.2" y="94.80" text-anchor="end" font-size="12.5" fill="#1b2050">70,000</text><path d="M74.0 125.50H463.3" stroke="#e2e3e6" stroke-width="1"/><path d="M69.0 125.50H74.5" stroke="#cfcfd4" stroke-width="1"/><text x="66.2" y="127.80" text-anchor="end" font-size="12.5" fill="#1b2050">60,000</text><path d="M74.0 157.50H463.3" stroke="#e2e3e6" stroke-width="1"/><path d="M69.0 157.50H74.5" stroke="#cfcfd4" stroke-width="1"/><text x="66.2" y="159.80" text-anchor="end" font-size="12.5" fill="#1b2050">50,000</text><path d="M74.0 190.50H463.3" stroke="#e2e3e6" stroke-width="1"/><path d="M69.0 190.50H74.5" stroke="#cfcfd4" stroke-width="1"/><text x="66.2" y="192.80" text-anchor="end" font-size="12.5" fill="#1b2050">40,000</text><path d="M74.0 222.50H463.3" stroke="#e2e3e6" stroke-width="1"/><path d="M69.0 222.50H74.5" stroke="#cfcfd4" stroke-width="1"/><text x="66.2" y="224.80" text-anchor="end" font-size="12.5" fill="#1b2050">30,000</text><path d="M74.0 255.50H463.3" stroke="#e2e3e6" stroke-width="1"/><path d="M69.0 255.50H74.5" stroke="#cfcfd4" stroke-width="1"/><text x="66.2" y="257.80" text-anchor="end" font-size="12.5" fill="#1b2050">20,000</text><path d="M74.0 287.50H463.3" stroke="#e2e3e6" stroke-width="1"/><path d="M69.0 287.50H74.5" stroke="#cfcfd4" stroke-width="1"/><text x="66.2" y="289.80" text-anchor="end" font-size="12.5" fill="#1b2050">10,000</text><path d="M74.0 320.50H463.3" stroke="#cfcfd4" stroke-width="1"/><path d="M69.0 320.50H74.5" stroke="#cfcfd4" stroke-width="1"/><text x="66.2" y="322.80" text-anchor="end" font-size="12.5" fill="#1b2050">0</text><path d="M74.5 60.0V321.0" stroke="#cfcfd4" stroke-width="1"/><path d="M74.50 320.0V326.0" stroke="#cfcfd4" stroke-width="1"/><path d="M171.50 320.0V326.0" stroke="#cfcfd4" stroke-width="1"/><path d="M269.50 320.0V326.0" stroke="#cfcfd4" stroke-width="1"/><path d="M366.50 320.0V326.0" stroke="#cfcfd4" stroke-width="1"/><path d="M463.50 320.0V326.0" stroke="#cfcfd4" stroke-width="1"/><text x="220.18" y="337.20" text-anchor="middle" font-size="12.5" fill="#1b2050">2025年02月</text><text x="317.43" y="337.20" text-anchor="middle" font-size="12.5" fill="#1b2050">2025年05月</text><text x="414.68" y="337.20" text-anchor="middle" font-size="12.5" fill="#1b2050">2025年09月</text><path d="M122.92 134.43C122.92 134.43 177.56 192.54 220.18 192.54C274.81 192.54 278.90 84.67 317.43 84.67C376.15 84.67 414.68 283.60 414.68 283.60" fill="none" stroke="#749af3" stroke-width="2" stroke-linejoin="round" stroke-linecap="round"/><path d="M122.92 320.00C122.92 320.00 171.55 303.75 220.18 303.75C268.80 303.75 269.11 320.00 317.43 320.00C366.36 320.00 414.68 297.25 414.68 297.25" fill="none" stroke="#445ca6" stroke-width="2" stroke-linejoin="round" stroke-linecap="round"/><circle cx="122.92" cy="134.43" r="3.4" fill="#749af3"/><circle cx="220.18" cy="192.54" r="3.4" fill="#749af3"/><circle cx="317.43" cy="84.67" r="3.4" fill="#749af3"/><circle cx="414.68" cy="283.60" r="3.4" fill="#749af3"/><text x="122.92" y="123.03" text-anchor="middle" font-size="12.5" fill="#333333" stroke="#fff" stroke-width="2" paint-order="stroke" stroke-linejoin="round">57,100</text><text x="220.18" y="181.14" text-anchor="middle" font-size="12.5" fill="#333333" stroke="#fff" stroke-width="2" paint-order="stroke" stroke-linejoin="round">39,217</text><text x="317.43" y="73.27" text-anchor="middle" font-size="12.5" fill="#333333" stroke="#fff" stroke-width="2" paint-order="stroke" stroke-linejoin="round">72,410</text><text x="414.68" y="272.20" text-anchor="middle" font-size="12.5" fill="#333333" stroke="#fff" stroke-width="2" paint-order="stroke" stroke-linejoin="round">11,200</text><circle cx="122.92" cy="320.00" r="3.4" fill="#445ca6"/><circle cx="220.18" cy="303.75" r="3.4" fill="#445ca6"/><circle cx="317.43" cy="320.00" r="3.4" fill="#445ca6"/><circle cx="414.68" cy="297.25" r="3.4" fill="#445ca6"/><text x="122.92" y="308.60" text-anchor="middle" font-size="12.5" fill="#333333" stroke="#fff" stroke-width="2" paint-order="stroke" stroke-linejoin="round">0</text><text x="220.18" y="292.35" text-anchor="middle" font-size="12.5" fill="#333333" stroke="#fff" stroke-width="2" paint-order="stroke" stroke-linejoin="round">5,000</text><text x="317.43" y="308.60" text-anchor="middle" font-size="12.5" fill="#333333" stroke="#fff" stroke-width="2" paint-order="stroke" stroke-linejoin="round">0</text><path d="M130.3 367.6H140.7" stroke="#749af3" stroke-width="2.4"/><circle cx="135.5" cy="367.6" r="3.7" fill="#749af3"/><text x="145.5" y="371.0" font-size="12" fill="#1b2050">计划付款金额（本位币）</text><path d="M288.4 367.6H298.8" stroke="#445ca6" stroke-width="2.4"/><circle cx="293.6" cy="367.6" r="3.7" fill="#445ca6"/><text x="304.0" y="371.0" font-size="12" fill="#1b2050">已付款金额</text></svg></div>
<div class="card" style="left:425px;top:634px;width:1448px;height:268px"><div class="ct" style="top:13.5px"><span class="z">合同执行情况汇总</span></div><svg style="left:1421.3px;top:13px" width="13" height="13" viewBox="0 0 13 13" ><circle cx="6.5" cy="6.5" r="5.8" fill="none" stroke="#1cbd68" stroke-width="1.25"/><rect x="5.75" y="5.7" width="1.5" height="4.1" fill="#1cbd68"/><rect x="5.75" y="3.7" width="1.5" height="1.3" fill="#1cbd68"/></svg><div class="abs" style="left:10px;top:45px;width:1428px;height:223px;overflow:hidden;background:#fafaff"><div class="abs" style="left:0;top:0;width:1px;height:223px;background:#e6e8f3"></div><div class="abs" style="right:0;top:0;width:1px;height:223px;background:#e6e8f3"></div><div class="abs" style="left:0;top:0;width:1428px;height:40px;background:#dbe1f3"></div><div class="abs" style="left:0px;top:0;width:167px;height:40px;padding:0 10px;font-size:12px;font-weight:700;line-height:43.8px;color:#0e1541;white-space:nowrap;">合同编号</div><div class="abs" style="left:167px;top:0;width:201px;height:40px;border-left:1px solid #e9ecf7;padding:0 10px;font-size:12px;font-weight:700;line-height:43.8px;color:#0e1541;white-space:nowrap;">合同名称</div><div class="abs" style="left:368px;top:0;width:161px;height:40px;border-left:1px solid #e9ecf7;padding:0 10px;font-size:12px;font-weight:700;line-height:43.8px;color:#0e1541;white-space:nowrap;">对方签约公司名称</div><div class="abs" style="left:529px;top:0;width:133px;height:40px;border-left:1px solid #e9ecf7;padding:0 10px;font-size:12px;font-weight:700;line-height:43.8px;color:#0e1541;white-space:nowrap;">生效日期</div><div class="abs" style="left:662px;top:0;width:141px;height:40px;border-left:1px solid #e9ecf7;padding:0 10px;font-size:12px;font-weight:700;line-height:43.8px;color:#0e1541;white-space:nowrap;">有效期至</div><div class="abs" style="left:803px;top:0;width:113px;height:40px;border-left:1px solid #e9ecf7;padding:0 10px;font-size:12px;font-weight:700;line-height:43.8px;color:#0e1541;white-space:nowrap;">合同金额</div><div class="abs" style="left:916px;top:0;width:99px;height:40px;border-left:1px solid #e9ecf7;padding:0 10px;font-size:12px;font-weight:700;line-height:43.8px;color:#0e1541;white-space:nowrap;">币种</div><div class="abs" style="left:1015px;top:0;width:149px;height:40px;border-left:1px solid #e9ecf7;padding:0 10px;font-size:12px;font-weight:700;line-height:43.8px;color:#0e1541;white-space:nowrap;">合同金额(不含税)</div><div class="abs" style="left:1164px;top:0;width:148px;height:40px;border-left:1px solid #e9ecf7;padding:0 10px;font-size:12px;font-weight:700;line-height:43.8px;color:#0e1541;white-space:nowrap;">计划付款金额</div><div class="abs" style="left:1312px;top:0;width:153px;height:40px;border-left:1px solid #e9ecf7;padding:0 10px;font-size:12px;font-weight:700;line-height:43.8px;color:#0e1541;white-space:nowrap;">计划付款金额（本位币）</div><div class="abs" style="left:0;top:79px;width:1428px;height:1px;background:#e6e8f3"></div><div class="abs" style="left:0px;top:40px;width:167px;height:40px;padding:0 10px;font-size:13px;line-height:41.4px;letter-spacing:-0.22px;color:#0e1541;white-space:nowrap;"><span style="letter-spacing:-1.15px">CG</span>202501002</div><div class="abs" style="left:167px;top:40px;width:201px;height:40px;border-left:1px solid #e6e8f3;padding:0 10px;font-size:13px;line-height:41.4px;letter-spacing:-0.22px;color:#0e1541;white-space:nowrap;">2024<span class="z13">年审计服务合同</span></div><div class="abs" style="left:368px;top:40px;width:161px;height:40px;border-left:1px solid #e6e8f3;padding:0 10px;font-size:13px;line-height:41.4px;letter-spacing:-0.22px;color:#0e1541;white-space:nowrap;"><span class="z13">广州商贸公司</span></div><div class="abs" style="left:529px;top:40px;width:133px;height:40px;border-left:1px solid #e6e8f3;padding:0 10px;font-size:13px;line-height:41.4px;letter-spacing:0.1px;color:#0e1541;white-space:nowrap;">2025-01-01</div><div class="abs" style="left:662px;top:40px;width:141px;height:40px;border-left:1px solid #e6e8f3;padding:0 10px;font-size:13px;line-height:41.4px;letter-spacing:0.1px;color:#0e1541;white-space:nowrap;">2025-12-31</div><div class="abs" style="left:803px;top:40px;width:113px;height:40px;border-left:1px solid #e6e8f3;padding:0 10px;font-size:13px;line-height:41.4px;letter-spacing:-0.22px;color:#0e1541;white-space:nowrap;text-align:right;">5,300</div><div class="abs" style="left:916px;top:40px;width:99px;height:40px;border-left:1px solid #e6e8f3;padding:0 10px;font-size:13px;line-height:41.4px;letter-spacing:-0.22px;color:#0e1541;white-space:nowrap;"><span style="letter-spacing:-1.15px">CNY</span></div><div class="abs" style="left:1015px;top:40px;width:149px;height:40px;border-left:1px solid #e6e8f3;padding:0 10px;font-size:13px;line-height:41.4px;letter-spacing:-0.22px;color:#0e1541;white-space:nowrap;text-align:right;">5,000</div><div class="abs" style="left:1164px;top:40px;width:148px;height:40px;border-left:1px solid #e6e8f3;padding:0 10px;font-size:13px;line-height:41.4px;letter-spacing:-0.22px;color:#0e1541;white-space:nowrap;text-align:right;">5,300</div><div class="abs" style="left:1312px;top:40px;width:153px;height:40px;border-left:1px solid #e6e8f3;padding:0 10px;font-size:13px;line-height:41.4px;letter-spacing:-0.22px;color:#0e1541;white-space:nowrap;text-align:right;"></div><div class="abs" style="left:0;top:119px;width:1428px;height:1px;background:#e6e8f3"></div><div class="abs" style="left:0px;top:80px;width:167px;height:40px;padding:0 10px;font-size:13px;line-height:41.4px;letter-spacing:-0.22px;color:#0e1541;white-space:nowrap;"><span style="letter-spacing:-1.15px">CG</span>202501006</div><div class="abs" style="left:167px;top:80px;width:201px;height:40px;border-left:1px solid #e6e8f3;padding:0 10px;font-size:13px;line-height:41.4px;letter-spacing:-0.22px;color:#0e1541;white-space:nowrap;"><span class="z13">开发外包服务合同</span></div><div class="abs" style="left:368px;top:80px;width:161px;height:40px;border-left:1px solid #e6e8f3;padding:0 10px;font-size:13px;line-height:41.4px;letter-spacing:-0.22px;color:#0e1541;white-space:nowrap;"><span class="z13">广州商贸公司</span></div><div class="abs" style="left:529px;top:80px;width:133px;height:40px;border-left:1px solid #e6e8f3;padding:0 10px;font-size:13px;line-height:41.4px;letter-spacing:0.1px;color:#0e1541;white-space:nowrap;">2025-01-01</div><div class="abs" style="left:662px;top:80px;width:141px;height:40px;border-left:1px solid #e6e8f3;padding:0 10px;font-size:13px;line-height:41.4px;letter-spacing:0.1px;color:#0e1541;white-space:nowrap;">2025-12-31</div><div class="abs" style="left:803px;top:80px;width:113px;height:40px;border-left:1px solid #e6e8f3;padding:0 10px;font-size:13px;line-height:41.4px;letter-spacing:-0.22px;color:#0e1541;white-space:nowrap;text-align:right;">100,000</div><div class="abs" style="left:916px;top:80px;width:99px;height:40px;border-left:1px solid #e6e8f3;padding:0 10px;font-size:13px;line-height:41.4px;letter-spacing:-0.22px;color:#0e1541;white-space:nowrap;"><span style="letter-spacing:-1.15px">USD</span></div><div class="abs" style="left:1015px;top:80px;width:149px;height:40px;border-left:1px solid #e6e8f3;padding:0 10px;font-size:13px;line-height:41.4px;letter-spacing:-0.22px;color:#0e1541;white-space:nowrap;text-align:right;">100,000</div><div class="abs" style="left:1164px;top:80px;width:148px;height:40px;border-left:1px solid #e6e8f3;padding:0 10px;font-size:13px;line-height:41.4px;letter-spacing:-0.22px;color:#0e1541;white-space:nowrap;text-align:right;">15,000</div><div class="abs" style="left:1312px;top:80px;width:153px;height:40px;border-left:1px solid #e6e8f3;padding:0 10px;font-size:13px;line-height:41.4px;letter-spacing:-0.22px;color:#0e1541;white-space:nowrap;text-align:right;">108,000</div><div class="abs" style="left:0;top:159px;width:1428px;height:1px;background:#e6e8f3"></div><div class="abs" style="left:0px;top:120px;width:167px;height:40px;padding:0 10px;font-size:13px;line-height:41.4px;letter-spacing:-0.22px;color:#0e1541;white-space:nowrap;"><span style="letter-spacing:-1.15px">CG</span>202502004</div><div class="abs" style="left:167px;top:120px;width:201px;height:40px;border-left:1px solid #e6e8f3;padding:0 10px;font-size:13px;line-height:41.4px;letter-spacing:-0.22px;color:#0e1541;white-space:nowrap;"><span class="z13">新项目</span>it<span class="z13">设备采购合同</span></div><div class="abs" style="left:368px;top:120px;width:161px;height:40px;border-left:1px solid #e6e8f3;padding:0 10px;font-size:13px;line-height:41.4px;letter-spacing:-0.22px;color:#0e1541;white-space:nowrap;"><span class="z13">广州商贸公司</span></div><div class="abs" style="left:529px;top:120px;width:133px;height:40px;border-left:1px solid #e6e8f3;padding:0 10px;font-size:13px;line-height:41.4px;letter-spacing:0.1px;color:#0e1541;white-space:nowrap;">2025-02-19</div><div class="abs" style="left:662px;top:120px;width:141px;height:40px;border-left:1px solid #e6e8f3;padding:0 10px;font-size:13px;line-height:41.4px;letter-spacing:0.1px;color:#0e1541;white-space:nowrap;">2025-09-16</div><div class="abs" style="left:803px;top:120px;width:113px;height:40px;border-left:1px solid #e6e8f3;padding:0 10px;font-size:13px;line-height:41.4px;letter-spacing:-0.22px;color:#0e1541;white-space:nowrap;text-align:right;">25,000</div><div class="abs" style="left:916px;top:120px;width:99px;height:40px;border-left:1px solid #e6e8f3;padding:0 10px;font-size:13px;line-height:41.4px;letter-spacing:-0.22px;color:#0e1541;white-space:nowrap;"><span style="letter-spacing:-1.15px">CNY</span></div><div class="abs" style="left:1015px;top:120px;width:149px;height:40px;border-left:1px solid #e6e8f3;padding:0 10px;font-size:13px;line-height:41.4px;letter-spacing:-0.22px;color:#0e1541;white-space:nowrap;text-align:right;">22,123.89</div><div class="abs" style="left:1164px;top:120px;width:148px;height:40px;border-left:1px solid #e6e8f3;padding:0 10px;font-size:13px;line-height:41.4px;letter-spacing:-0.22px;color:#0e1541;white-space:nowrap;text-align:right;">16,000</div><div class="abs" style="left:1312px;top:120px;width:153px;height:40px;border-left:1px solid #e6e8f3;padding:0 10px;font-size:13px;line-height:41.4px;letter-spacing:-0.22px;color:#0e1541;white-space:nowrap;text-align:right;"></div><div class="abs" style="left:0;top:199px;width:1428px;height:1px;background:#e6e8f3"></div><div class="abs" style="left:0px;top:160px;width:167px;height:40px;padding:0 10px;font-size:13px;line-height:41.4px;letter-spacing:-0.22px;color:#0e1541;white-space:nowrap;"><span style="letter-spacing:-1.15px">CG</span>202505001</div><div class="abs" style="left:167px;top:160px;width:201px;height:40px;border-left:1px solid #e6e8f3;padding:0 10px;font-size:13px;line-height:41.4px;letter-spacing:-0.22px;color:#0e1541;white-space:nowrap;">5<span class="z13">月采购合同</span></div><div class="abs" style="left:368px;top:160px;width:161px;height:40px;border-left:1px solid #e6e8f3;padding:0 10px;font-size:13px;line-height:41.4px;letter-spacing:-0.22px;color:#0e1541;white-space:nowrap;"><span class="z13">广州商贸公司</span></div><div class="abs" style="left:529px;top:160px;width:133px;height:40px;border-left:1px solid #e6e8f3;padding:0 10px;font-size:13px;line-height:41.4px;letter-spacing:0.1px;color:#0e1541;white-space:nowrap;">2025-05-15</div><div class="abs" style="left:662px;top:160px;width:141px;height:40px;border-left:1px solid #e6e8f3;padding:0 10px;font-size:13px;line-height:41.4px;letter-spacing:0.1px;color:#0e1541;white-space:nowrap;">2025-06-18</div><div class="abs" style="left:803px;top:160px;width:113px;height:40px;border-left:1px solid #e6e8f3;padding:0 10px;font-size:13px;line-height:41.4px;letter-spacing:-0.22px;color:#0e1541;white-space:nowrap;text-align:right;">100,000</div><div class="abs" style="left:916px;top:160px;width:99px;height:40px;border-left:1px solid #e6e8f3;padding:0 10px;font-size:13px;line-height:41.4px;letter-spacing:-0.22px;color:#0e1541;white-space:nowrap;"><span style="letter-spacing:-1.15px">CNY</span></div><div class="abs" style="left:1015px;top:160px;width:149px;height:40px;border-left:1px solid #e6e8f3;padding:0 10px;font-size:13px;line-height:41.4px;letter-spacing:-0.22px;color:#0e1541;white-space:nowrap;text-align:right;">99,900</div><div class="abs" style="left:1164px;top:160px;width:148px;height:40px;border-left:1px solid #e6e8f3;padding:0 10px;font-size:13px;line-height:41.4px;letter-spacing:-0.22px;color:#0e1541;white-space:nowrap;text-align:right;">50,000</div><div class="abs" style="left:1312px;top:160px;width:153px;height:40px;border-left:1px solid #e6e8f3;padding:0 10px;font-size:13px;line-height:41.4px;letter-spacing:-0.22px;color:#0e1541;white-space:nowrap;text-align:right;"></div></div></div>
<div id="side"><div class="abs" style="left:-3px;top:9px;width:42px;height:42px;border-radius:21px;background:#575d94"></div><svg style="left:9px;top:21px" width="18" height="18" viewBox="0 0 18 18" ><circle cx="9.1" cy="4.8" r="4.2" fill="#fff"/><path d="M0.6 17.1 L0.6 15.6 Q0.6 11.3 5 11.3 L13.2 11.3 Q17.6 11.3 17.6 15.6 L17.6 17.1Z" fill="#fff"/></svg><div class="abs" style="left:-3px;top:85px;width:48px;height:58px;border-radius:4px;background:#b9b9c6"></div><svg style="left:8.8px;top:91.8px" width="18.4" height="18.4" viewBox="0 0 18.4 18.4" ><path d="M9.2 0.3 L18 8.2 L15.4 8.2 L15.4 18 L10.9 18 L10.9 13.4 L7.5 13.4 L7.5 18 L3 18 L3 8.2 L0.4 8.2Z" fill="#7b70f5" stroke="#7b70f5" stroke-width="0.5" stroke-linejoin="round"/></svg><div class="sl" style="top:121.4px;color:#7b70f5;font-weight:400">工作台</div><svg style="left:10.8px;top:158.3px" width="14.2" height="16" viewBox="0 0 14.2 16" ><path d="M0.2 4.4 Q0.2 2.6 2 2.6 L3.6 2.6 L3.6 4 Q3.6 4.8 4.4 4.8 L9.8 4.8 Q10.6 4.8 10.6 4 L10.6 2.6 L12.2 2.6 Q14 2.6 14 4.4 L14 14.2 Q14 16 12.2 16 L2 16 Q0.2 16 0.2 14.2Z" fill="#d1d1d8"/><rect x="4.6" y="0.2" width="5" height="3.6" rx="1" fill="#d1d1d8"/><path d="M3.8 9.8 L6.4 12.2 L10.6 7.4" stroke="#121539" stroke-width="1.3" fill="none" stroke-linecap="round" stroke-linejoin="round"/></svg><div class="abs" style="left:20.2px;top:153px;width:16px;height:16px;border-radius:8px;background:#f6655a;color:#fff;font-size:12px;line-height:16px;text-align:center">2</div><div class="sl" style="top:187.4px">待办</div><svg style="left:9.6px;top:222.8px" width="17" height="18" viewBox="0 0 17 18" ><rect x="0" y="0.9" width="7.2" height="7.2" rx="1" fill="#d1d1d8"/><rect x="0" y="10" width="7.2" height="7.2" rx="1" fill="#d1d1d8"/><rect x="9.4" y="10" width="7.2" height="7.2" rx="1" fill="#d1d1d8"/><rect x="-3.1" y="-3.1" width="6.2" height="6.2" rx="0.8" fill="#6a6c8e" transform="translate(12.8 4.4) rotate(45)"/></svg><div class="sl" style="top:252.4px">应用</div><svg style="left:10.5px;top:289.0px" width="14.6" height="16.2" viewBox="0 0 14.6 16.2" ><path d="M0.2 1.4 Q0.2 0.4 1.2 0.4 L2.2 0.4 L2.2 3 L3.4 2.2 L4.6 3 L4.6 0.4 L13.4 0.4 Q14.4 0.4 14.4 1.4 L14.4 15 Q14.4 16 13.4 16 L1.6 16 Q0.2 16 0.2 14.6Z" fill="#d1d1d8"/><path d="M2.2 13.9 H14.4" stroke="#121539" stroke-width="0.9"/></svg><div class="abs" style="left:10.7px;top:294.2px;width:14.6px;text-align:center;font-size:8.5px;line-height:9px;font-weight:700;font-style:italic;color:#121539;letter-spacing:-0.2px">AI</div><div class="sl" style="top:318.4px">知识库</div><svg style="left:7.7px;top:750.8px" width="20.6" height="24.4" viewBox="0 0 20.6 24.4" ><path d="M10.3 0.2 Q11.6 0.2 11.9 1.6 Q16.8 3.2 16.8 9 L16.8 14.6 Q16.8 16.4 19 17.6 Q20.4 18.4 20.2 19.4 L0.4 19.4 Q0.2 18.4 1.6 17.6 Q3.8 16.4 3.8 14.6 L3.8 9 Q3.8 3.2 8.7 1.6 Q9 0.2 10.3 0.2Z" fill="#d1d1d8"/><path d="M7 21 Q10.3 25.6 13.6 21Z" fill="#d1d1d8"/></svg><div class="abs" style="left:5.9px;top:805px;width:24.2px;height:24.2px;border-radius:13px;background:#d1d1d8;color:#121539;font-size:17px;line-height:25px;text-align:center;font-weight:400;-webkit-text-stroke:0.4px #121539">?</div><svg style="left:7.2px;top:861.7px" width="21" height="20.4" viewBox="0 0 21 20.4" ><path d="M19.76,8.58L19.76,11.82L17.89,11.97L16.98,14.17L18.19,15.61L15.91,17.89L14.47,16.68L12.27,17.59L12.12,19.46L8.88,19.46L8.73,17.59L6.53,16.68L5.09,17.89L2.81,15.61L4.02,14.17L3.11,11.97L1.24,11.82L1.24,8.58L3.11,8.43L4.02,6.23L2.81,4.79L5.09,2.51L6.53,3.72L8.73,2.81L8.88,0.94L12.12,0.94L12.27,2.81L14.47,3.72L15.91,2.51L18.19,4.79L16.98,6.23L17.89,8.43Z" fill="#d1d1d8" stroke="#d1d1d8" stroke-width="2.2" stroke-linejoin="round"/><circle cx="10.5" cy="10.2" r="3.3" fill="#3c3f68"/></svg></div>
</body></html>
